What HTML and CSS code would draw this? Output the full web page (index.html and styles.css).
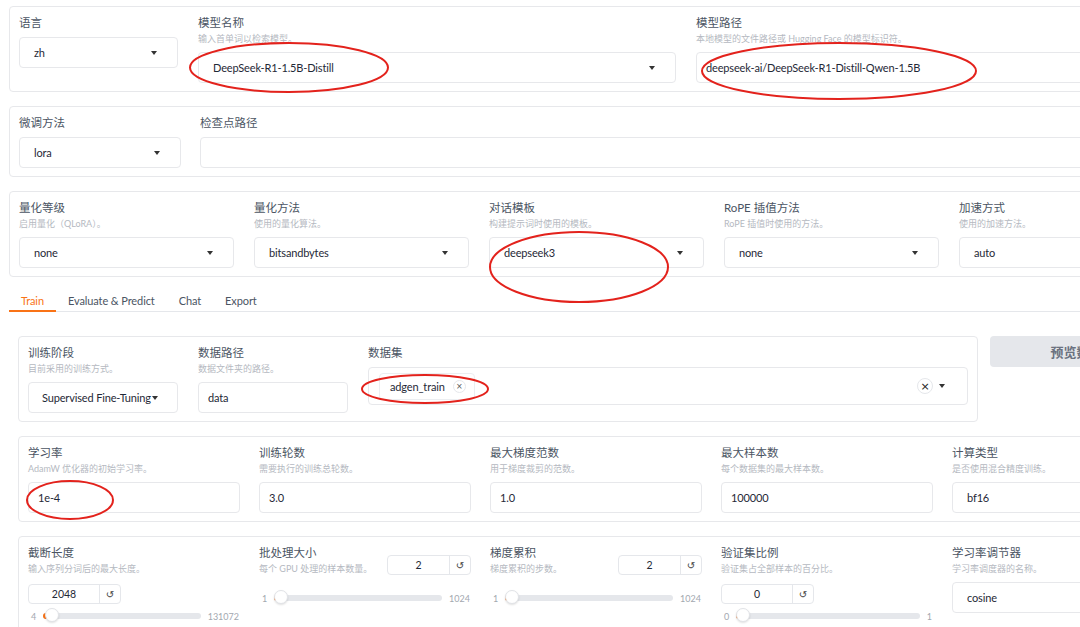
FILE: index.html
```html
<!DOCTYPE html>
<html>
<head>
<meta charset="utf-8">
<title>LLaMA Board</title>
<link rel="stylesheet" href="styles.css">
</head>
<body>

<div class="page">

  <!-- model -->
  <div class="panel">
    <div class="field w159">
      <div class="label">语言</div>
      <div class="select"><span>zh</span><i class="caret"></i></div>
    </div>
    <div class="field w478">
      <div class="label">模型名称</div>
      <div class="hint">输入首单词以检索模型。</div>
      <div class="select"><span>DeepSeek-R1-1.5B-Distill</span><i class="caret"></i></div>
    </div>
    <div class="field w478">
      <div class="label">模型路径</div>
      <div class="hint">本地模型的文件路径或 Hugging Face 的模型标识符。</div>
      <div class="textbox">deepseek-ai/DeepSeek-R1-Distill-Qwen-1.5B</div>
    </div>
  </div>

  <div class="panel gap19">
    <div class="field w162">
      <div class="label">微调方法</div>
      <div class="select"><span>lora</span><i class="caret"></i></div>
    </div>
    <div class="field grow">
      <div class="label">检查点路径</div>
      <div class="textbox"></div>
    </div>
  </div>

  <div class="panel">
    <div class="field w215">
      <div class="label">量化等级</div>
      <div class="hint">启用量化（QLoRA）。</div>
      <div class="select"><span>none</span><i class="caret"></i></div>
    </div>
    <div class="field w215">
      <div class="label">量化方法</div>
      <div class="hint">使用的量化算法。</div>
      <div class="select"><span>bitsandbytes</span><i class="caret"></i></div>
    </div>
    <div class="field w215">
      <div class="label">对话模板</div>
      <div class="hint">构建提示词时使用的模板。</div>
      <div class="select"><span>deepseek3</span><i class="caret"></i></div>
    </div>
    <div class="field w215">
      <div class="label">RoPE 插值方法</div>
      <div class="hint">RoPE 插值时使用的方法。</div>
      <div class="select"><span>none</span><i class="caret"></i></div>
    </div>
    <div class="field w215">
      <div class="label">加速方式</div>
      <div class="hint">使用的加速方法。</div>
      <div class="select"><span>auto</span><i class="caret"></i></div>
    </div>
  </div>

  <div class="tabs">
    <button class="tab active">Train</button>
    <button class="tab">Evaluate &amp; Predict</button>
    <button class="tab">Chat</button>
    <button class="tab">Export</button>
  </div>

  <div class="tabbody">

    <div class="data-row">
      <div class="panel">
        <div class="field w150">
          <div class="label">训练阶段</div>
          <div class="hint">目前采用的训练方式。</div>
          <div class="select tight"><span>Supervised Fine-Tuning</span><i class="caret"></i></div>
        </div>
        <div class="field w150">
          <div class="label">数据路径</div>
          <div class="hint">数据文件夹的路径。</div>
          <div class="textbox">data</div>
        </div>
        <div class="field grow">
          <div class="label">数据集</div>
          <div class="multi">
            <span class="chip">adgen_train <i class="chip-x">×</i></span>
            <span class="clear">×</span>
            <i class="caret"></i>
          </div>
        </div>
      </div>
      <button class="preview">预览数据集</button>
    </div>

    <div class="panel gap19">
      <div class="field w212">
        <div class="label">学习率</div>
        <div class="hint">AdamW 优化器的初始学习率。</div>
        <div class="textbox">1e-4</div>
      </div>
      <div class="field w212">
        <div class="label">训练轮数</div>
        <div class="hint">需要执行的训练总轮数。</div>
        <div class="textbox">3.0</div>
      </div>
      <div class="field w212">
        <div class="label">最大梯度范数</div>
        <div class="hint">用于梯度裁剪的范数。</div>
        <div class="textbox">1.0</div>
      </div>
      <div class="field w212">
        <div class="label">最大样本数</div>
        <div class="hint">每个数据集的最大样本数。</div>
        <div class="textbox">100000</div>
      </div>
      <div class="field w212">
        <div class="label">计算类型</div>
        <div class="hint">是否使用混合精度训练。</div>
        <div class="select"><span>bf16</span><i class="caret"></i></div>
      </div>
    </div>

    <div class="panel gap19">
      <div class="field w212">
        <div class="slider-head wrap">
          <div>
            <div class="label">截断长度</div>
            <div class="hint">输入序列分词后的最大长度。</div>
          </div>
          <div class="number wide"><span>2048</span><b class="reset">↺</b></div>
        </div>
        <div class="slider low">
          <span>4</span>
          <div class="track" style="--v:0.015"><i class="fill"></i><i class="thumb"></i></div>
          <span>131072</span>
        </div>
      </div>
      <div class="field w212">
        <div class="slider-head">
          <div>
            <div class="label">批处理大小</div>
            <div class="hint">每个 GPU 处理的样本数量。</div>
          </div>
          <div class="number"><span>2</span><b class="reset">↺</b></div>
        </div>
        <div class="slider">
          <span>1</span>
          <div class="track" style="--v:0.001"><i class="fill"></i><i class="thumb"></i></div>
          <span>1024</span>
        </div>
      </div>
      <div class="field w212">
        <div class="slider-head">
          <div>
            <div class="label">梯度累积</div>
            <div class="hint">梯度累积的步数。</div>
          </div>
          <div class="number"><span>2</span><b class="reset">↺</b></div>
        </div>
        <div class="slider">
          <span>1</span>
          <div class="track" style="--v:0.001"><i class="fill"></i><i class="thumb"></i></div>
          <span>1024</span>
        </div>
      </div>
      <div class="field w212">
        <div class="slider-head wrap">
          <div>
            <div class="label">验证集比例</div>
            <div class="hint">验证集占全部样本的百分比。</div>
          </div>
          <div class="number wide"><span>0</span><b class="reset">↺</b></div>
        </div>
        <div class="slider low">
          <span>0</span>
          <div class="track" style="--v:0"><i class="fill"></i><i class="thumb"></i></div>
          <span>1</span>
        </div>
      </div>
      <div class="field w212">
        <div class="label">学习率调节器</div>
        <div class="hint">学习率调度器的名称。</div>
        <div class="select"><span>cosine</span><i class="caret"></i></div>
      </div>
    </div>

  </div>
</div>

<!-- hand drawn marks -->
<svg class="marks" width="1080" height="627" viewBox="0 0 1080 627">
  <ellipse cx="289" cy="67.5" rx="99" ry="24.5"/>
  <ellipse cx="839" cy="71" rx="137" ry="28"/>
  <ellipse cx="579" cy="267" rx="89" ry="35"/>
  <ellipse cx="425" cy="389" rx="63" ry="14"/>
  <ellipse cx="70" cy="500" rx="43" ry="19"/>
</svg>

</body>
</html>
```

FILE: styles.css
```css
html, body {
  margin: 0;
  overflow: hidden;
}

body {
  position: relative;
  background: #fff;
  font-family: Lato, "Noto Sans CJK SC", sans-serif;
  color: #1f2937;
}

.page {
  width: 1176px;
  padding: 6px 9px 0;
}

/* blocks */
.panel {
  display: flex;
  gap: 20px;
  padding: 8px 9px;
  border: 1px solid #e7e8eb;
  border-radius: 4px;
  background: #fff;
  margin-bottom: 14px;
}

.panel.gap19 {
  gap: 19px;
}

.field {
  display: flex;
  flex-direction: column;
  flex: none;
}

.field.grow { flex: 1; }
.w150 { width: 150px; }
.w159 { width: 159px; }
.w162 { width: 162px; }
.w212 { width: 212px; }
.w215 { width: 215px; }
.w478 { width: 478px; }

.label {
  font-size: 11.5px;
  line-height: 16px;
  color: #4b5563;
}

.hint {
  font-size: 9px;
  line-height: 15px;
  color: #b5b9c1;
  white-space: nowrap;
}

/* inputs */
.select, .textbox {
  box-sizing: border-box;
  height: 31px;
  margin-top: 6px;
  display: flex;
  align-items: center;
  border: 1px solid #e7e8eb;
  border-radius: 4px;
  font-size: 11px;
  letter-spacing: -0.15px;
  color: #1f2937;
  white-space: nowrap;
  overflow: hidden;
}

.select {
  padding: 0 20px 0 14px;
}

.select.tight {
  padding: 0 18px 0 13px;
}

.textbox {
  padding: 0 9px;
}

.caret {
  flex: none;
  margin-left: auto;
  width: 0;
  height: 0;
  border-left: 3.5px solid transparent;
  border-right: 3.5px solid transparent;
  border-top: 4px solid #333;
}

.select.tight .caret {
  margin-left: 1px;
}

.multi {
  box-sizing: border-box;
  height: 38px;
  margin-top: 6px;
  padding: 0 22px 0 10px;
  display: flex;
  align-items: center;
  border: 1px solid #e7e8eb;
  border-radius: 4px;
}

.chip {
  display: flex;
  align-items: center;
  gap: 8px;
  height: 27px;
  box-sizing: border-box;
  padding: 0 8px 0 10px;
  border: 1px solid #eceef1;
  border-radius: 4px;
  font-size: 11px;
  letter-spacing: -0.15px;
  color: #1f2937;
}

.chip-x, .clear {
  display: flex;
  align-items: center;
  justify-content: center;
  border: 1px solid #e5e7eb;
  border-radius: 50%;
  font-style: normal;
  color: #555;
  font-family: "DejaVu Sans", sans-serif;
}

.chip-x {
  width: 11px;
  height: 11px;
  font-size: 8px;
}

.clear {
  margin-left: auto;
  width: 14px;
  height: 14px;
  font-size: 11px;
  color: #222;
  margin-right: 6px;
}

.multi .caret {
  margin-left: 0;
}

/* tabs */
.tabs {
  display: flex;
  margin-top: -1px;
  border-bottom: 1px solid #e5e7eb;
}

.tab {
  height: 22px;
  margin-bottom: -1px;
  padding: 0 12px;
  border: none;
  border-bottom: 2px solid transparent;
  background: none;
  font-family: inherit;
  font-size: 11px;
  letter-spacing: -0.1px;
  color: #4b5563;
}

.tab.active {
  color: #f97316;
  border-bottom-color: #f97316;
}

.tabbody {
  padding: 24px 9px 0;
}

.data-row {
  display: flex;
  gap: 12px;
  align-items: flex-start;
}

.data-row .panel {
  flex: 1;
}

.preview {
  flex: none;
  width: 186px;
  height: 31px;
  border: none;
  border-radius: 4px;
  background: #e5e7eb;
  font-family: inherit;
  font-size: 13px;
  font-weight: bold;
  color: #6b7280;
}

/* sliders */
.slider-head {
  display: flex;
  justify-content: space-between;
  align-items: flex-start;
}

.slider-head.wrap {
  flex-direction: column;
}

.number {
  box-sizing: border-box;
  width: 84px;
  height: 20px;
  margin-top: 10px;
  display: flex;
  border: 1px solid #e5e7eb;
  border-radius: 4px;
  font-size: 10.5px;
  color: #1f2937;
}

.number.wide {
  width: 93px;
  margin-top: 8px;
}

.number span {
  flex: 1;
  display: flex;
  align-items: center;
  justify-content: center;
}

.reset {
  width: 20px;
  display: flex;
  align-items: center;
  justify-content: center;
  border-left: 1px solid #e5e7eb;
  font-family: "DejaVu Sans", sans-serif;
  font-weight: normal;
  font-size: 10px;
  color: #444;
}

.slider {
  display: flex;
  align-items: center;
  gap: 7px;
  height: 16px;
  margin-top: 14px;
  padding: 0 1px 0 3px;
  font-size: 9px;
  color: #a3a8b0;
}

.slider.low {
  margin-top: 4px;
}

.track {
  position: relative;
  flex: 1;
  height: 6px;
  border-radius: 3px;
  background: #e5e7eb;
}

.fill {
  position: absolute;
  left: 0;
  top: 0;
  bottom: 0;
  width: calc(var(--v) * (100% - 14px) + 7px);
  border-radius: 3px;
  background: #f97316;
}

.thumb {
  position: absolute;
  top: -5px;
  left: calc(var(--v) * (100% - 14px));
  width: 14px;
  height: 14px;
  box-sizing: border-box;
  border: 1px solid #e1e3e7;
  border-radius: 50%;
  background: #fff;
  box-shadow: 0 1px 2px rgba(0, 0, 0, 0.12);
}

/* red pen marks over the screenshot */
.marks {
  position: absolute;
  top: 0;
  left: 0;
  pointer-events: none;
}

.marks ellipse {
  fill: none;
  stroke: #e3221c;
  stroke-width: 2;
}
```
